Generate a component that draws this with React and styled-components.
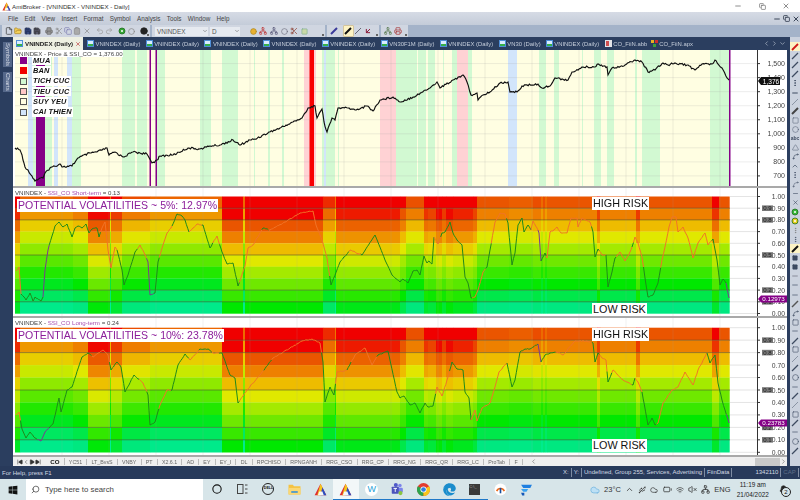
import React from "react";
import styled, { createGlobalStyle } from "styled-components";
import {
  ArrowDownLeft, ChevronDown, ChevronLeft, ChevronRight, ChevronUp, Circle, Clipboard, Cloud, Copy, File,
  FolderOpen, Minus, MoreVertical, Printer, Redo2, Save, Scissors, Search, Spline, Square, Triangle,
  Undo2, VolumeX, Wifi, X, Battery, Usb, Bell, Network, Play, SkipBack, SkipForward,
} from "lucide-react";
import { FaWindows, FaEdge } from "react-icons/fa";

const NAVY = "#2b3e5f";
const PURPLE = "#850087";

const GlobalStyle = createGlobalStyle`
  html, body { margin: 0; padding: 0; background: #fff; }
  body { width: 800px; height: 500px; overflow: hidden; font-family: "Liberation Sans", Arial, sans-serif; }
`;

const Frame = styled.div`
  width: 800px;
  height: 500px;
  display: flex;
  flex-direction: column;
  overflow: hidden;
  filter: blur(0.3px);
`;

const TitleBar = styled.div`
  height: 12px;
  background: #fff;
  display: flex;
  align-items: center;
  padding: 0 2px 0 2px;
  font-size: 6.2px;
  color: #333;
`;
const TitleText = styled.span`
  margin-left: 1px;
  flex: 1;
`;
const WinButton = styled.span`
  width: 24px;
  display: flex;
  justify-content: center;
  color: #555;
`;

const MenuBar = styled.div`
  height: 13px;
  background: linear-gradient(#d6dbe5, #c4ccd9);
  display: flex;
  align-items: center;
  padding-left: 8px;
  gap: 6.3px;
  font-size: 6.3px;
  color: #444;
`;
const MdiButtons = styled.div`
  margin-left: auto;
  display: flex;
  gap: 2px;
  color: #3b4658;
`;

const ToolRow = styled.div`
  height: 12px;
  background: #a4b3c9;
  display: flex;
  padding-left: 2px;
  gap: 2px;
`;
const ToolStrip = styled.div`
  width: ${(p) => p.$w}px;
  background: #d0d6e1;
  display: flex;
  align-items: center;
  padding-left: 3px;
  box-sizing: border-box;
  gap: ${(p) => p.$gap ?? 1}px;
  position: relative;
  &::after {
    content: "";
    position: absolute;
    right: 1px;
    bottom: 1px;
    width: 2px;
    height: 2px;
    background: #666;
  }
`;
const ToolIcon = styled.span`
  width: 8.3px;
  height: 10px;
  display: flex;
  align-items: center;
  justify-content: center;
  background: ${(p) => (p.$active ? "#fdf3c4" : "none")};
  box-shadow: ${(p) => (p.$active ? "0 0 0 0.5px #d8b45a" : "none")};
`;
const ToolGap = styled.span`
  width: ${(p) => p.$w}px;
`;
const Combo = styled.div`
  width: ${(p) => p.$w}px;
  height: 9px;
  background: #e6eaf0;
  font-size: 6.4px;
  color: #555;
  display: flex;
  align-items: center;
  padding-left: 2px;
  box-sizing: border-box;
  justify-content: space-between;
`;

const Workspace = styled.div`
  flex: 1;
  display: flex;
  min-height: 0;
`;
const LeftRail = styled.div`
  width: 13px;
  background: ${NAVY};
  padding-top: 5px;
  display: flex;
  flex-direction: column;
  align-items: flex-end;
  gap: 5px;
`;
const RailTab = styled.div`
  writing-mode: vertical-rl;
  width: 9px;
  height: ${(p) => p.$h}px;
  background: #55688a;
  color: #d5dbe6;
  font-size: 6px;
  line-height: 9px;
  text-align: center;
  margin-right: 1px;
`;
const Center = styled.div`
  width: 774px;
  display: flex;
  flex-direction: column;
`;
const TabStrip = styled.div`
  height: 13px;
  background: ${NAVY};
  display: flex;
  align-items: center;
  color: #c6cedb;
  font-size: 5.9px;
  white-space: nowrap;
`;
const ActiveTab = styled.div`
  width: 70px;
  height: 13px;
  margin-right: 3px;
  background: #eef0e2;
  color: #222;
  font-size: 6.2px;
  font-weight: bold;
  display: flex;
  align-items: center;
  gap: 2px;
  padding-left: 3px;
  box-sizing: border-box;
`;
const Tab = styled.div`
  width: ${(p) => p.$w}px;
  flex-shrink: 0;
  display: flex;
  align-items: center;
  gap: 1.5px;
`;
const TabTail = styled.div`
  margin-left: auto;
  display: flex;
  align-items: center;
  gap: 1px;
  padding-right: 1px;
`;
const ChartBody = styled.div`
  flex: 1;
  background: #fff;
  display: flex;
  flex-direction: column;
  min-height: 0;
`;
const Pane = styled.div`
  height: ${(p) => p.$h}px;
  position: relative;
  border-bottom: 2px solid #a9a9a9;
  flex-shrink: 0;
`;
const ChartSvg = styled.svg`
  display: block;
`;
const PaneTitle = styled.div`
  position: absolute;
  left: 2px;
  top: ${(p) => p.$top}px;
  font-size: 6.15px;
  line-height: 7px;
  color: #444;
  background: #fff;
  white-space: nowrap;
`;
const PaneTitleHi = styled.span`
  color: #a84fb0;
`;
const Legend = styled.div`
  position: absolute;
  left: 7px;
  top: 5.5px;
  display: flex;
  flex-direction: column;
  gap: 0.6px;
`;
const LegendRow = styled.div`
  display: flex;
  align-items: center;
  gap: 5px;
  height: 9.8px;
`;
const Swatch = styled.span`
  width: 5px;
  height: 5px;
  background: ${(p) => p.$color};
  border: 0.5px solid ${(p) => p.$edge};
`;
const LegendText = styled.span`
  background: #fff;
  font-size: 7.4px;
  line-height: 9.8px;
  font-weight: bold;
  font-style: italic;
  color: #111;
  padding: 0 1px;
  letter-spacing: 0.2px;
`;
const VolLabel = styled.div`
  position: absolute;
  left: 4px;
  top: ${(p) => p.$top}px;
  background: #fff;
  color: #8c1d9a;
  font-size: 10.55px;
  line-height: 13px;
  padding: 0 1px;
  white-space: nowrap;
`;
const RiskLabel = styled.div`
  position: absolute;
  left: 579px;
  top: ${(p) => p.$top}px;
  background: #fff;
  color: #111;
  font-size: 10.8px;
  line-height: 13px;
  padding: 0 1px;
  white-space: nowrap;
`;
const SheetRow = styled.div`
  height: 9px;
  background: #efefef;
  display: flex;
  align-items: center;
  font-size: 5.3px;
  color: #666;
  white-space: nowrap;
`;
const SheetNav = styled.div`
  display: flex;
  align-items: center;
  padding-left: 4px;
  width: 33px;
  color: #333;
  box-sizing: border-box;
`;
const Sheet = styled.span`
  padding: 0 4.2px;
  color: ${(p) => (p.$active ? "#111" : "#666")};
  font-size: ${(p) => (p.$active ? "6.2px" : "inherit")};
  font-weight: ${(p) => (p.$active ? "bold" : "normal")};
  border-right: 1px solid #bbb;
`;
const SheetTail = styled.div`
  margin-left: auto;
  width: 257px;
  display: flex;
  align-items: center;
  justify-content: space-between;
`;
const Thumb = styled.span`
  width: 25px;
  height: 8px;
  background: #c9c9c9;
  margin-left: auto;
`;
const RightBar = styled.div`
  width: 13px;
  box-sizing: border-box;
  border-left: 3px solid ${NAVY};
  background: #cbd2de;
  display: flex;
  flex-direction: column;
  padding-top: 5px;
  overflow: hidden;
`;
const RailButton = styled.div`
  height: 9.2px;
  flex-shrink: 0;
  display: flex;
  align-items: center;
  justify-content: center;
  color: #3d4a60;
  font-size: 5px;
  font-weight: bold;
  background: ${(p) => (p.$active ? "#fdf3c4" : "none")};
`;

const StatusBar = styled.div`
  height: 13px;
  background: #283a5b;
  color: #d3d9e4;
  font-size: 6px;
  display: flex;
  align-items: center;
  padding-left: 2px;
  white-space: nowrap;
`;
const StatusRight = styled.div`
  margin-left: auto;
  width: 239px;
  display: flex;
  align-items: center;
`;
const StatusCell = styled.span`
  border-right: 1px solid #7f8ca3;
  padding: 0 2px;
  height: 9px;
  line-height: 9px;
  color: ${(p) => p.$dim ?? "inherit"};
  margin-left: ${(p) => p.$ml ?? 0}px;
`;

const TaskBar = styled.div`
  height: 21px;
  background: #d7e5e9;
  display: flex;
  align-items: center;
`;
const StartSlot = styled.div`
  width: 26px;
  display: flex;
  justify-content: center;
  color: #111;
`;
const SearchBox = styled.div`
  width: 177px;
  height: 21px;
  background: #fff;
  display: flex;
  align-items: center;
  gap: 5px;
  padding-left: 5px;
  box-sizing: border-box;
  font-size: 7.8px;
  color: #444;
`;
const SearchGlyph = styled(Search)`
  transform: scaleX(-1);
`;
const TaskApps = styled.div`
  display: flex;
  align-items: center;
  height: 21px;
  margin-left: 1px;
`;
const TaskApp = styled.div`
  width: 25.8px;
  height: 21px;
  display: flex;
  align-items: center;
  justify-content: center;
  box-sizing: border-box;
  background: ${(p) => (p.$active ? "#f2f7f8" : "none")};
  border-bottom: 1px solid ${(p) => (p.$open ? "#1f78c8" : "transparent")};
  color: #111;
`;
const Tray = styled.div`
  margin-left: auto;
  display: flex;
  align-items: center;
  gap: 4.2px;
  padding-right: 9px;
  color: #333;
  font-size: 7.5px;
`;
const Clock = styled.div`
  display: flex;
  flex-direction: column;
  align-items: center;
  font-size: 6.4px;
  line-height: 10px;
  color: #222;
  width: 36px;
`;
const NotifyWrap = styled.div`
  position: relative;
  width: 16px;
  display: flex;
  justify-content: center;
`;
const NotifyBadge = styled.span`
  position: absolute;
  right: 0;
  bottom: -3px;
  width: 8px;
  height: 8px;
  border-radius: 50%;
  background: #d7e5e9;
  border: 0.5px solid #222;
  font-size: 6px;
  line-height: 8px;
  text-align: center;
  color: #111;
`;
const DellMark = styled.span`
  width: 12px;
  height: 12px;
  border-radius: 50%;
  border: 1.2px solid #222;
  box-sizing: border-box;
  font-size: 3.6px;
  font-weight: bold;
  line-height: 9.5px;
  text-align: center;
`;
const WApp = styled.span`
  width: 13px;
  height: 13px;
  border-radius: 50%;
  background: #fff;
  color: #1f9fd8;
  font-size: 9px;
  line-height: 13px;
  text-align: center;
`;
const TermApp = styled.span`
  width: 11px;
  height: 11px;
  background: #3a3a3a;
  color: #aaa;
  font-size: 4px;
  line-height: 5px;
`;
const TabGlyph = styled.svg`
  flex-shrink: 0;
`;

// chart data, all in screen coordinates
const PRICE_BANDS = [
  [28, 33, "b"], [33, 36, "g"], [45, 52, "g"], [54, 58, "b"], [67, 72, "b"], [72, 81, "g"], [122, 135, "g"],
  [137, 147, "g"], [157, 165, "g"], [200, 211, "g"], [222, 238, "g"], [254, 255, "g"], [268, 270, "g"],
  [282, 284, "g"], [304, 310, "p"], [314, 316, "p"], [322, 324, "g"], [324, 326, "b"], [326, 335, "g"],
  [338, 339, "g"], [380, 396, "p"], [396, 417, "g"], [418, 426, "g"], [428, 435, "g"], [443, 444, "g"],
  [452, 457, "g"], [457, 468, "p"], [468, 472, "g"], [508, 517, "b"], [539, 546, "g"], [554, 559, "g"],
  [582, 583, "g"], [594, 601, "g"], [607, 614, "g"], [635, 637, "g"], [642, 660, "g"], [710, 729, "g"],
];
const BAND_COLOR = { g: "#d2f9d2", b: "#d2e5fb", p: "#ffd2d4" };
const PRICE_BARS = [[36, 45, PURPLE], [149.5, 151, PURPLE], [155.5, 157, PURPLE], [309.5, 314, "#f80000"], [729, 730.5, PURPLE]];

const PRICE = [
  [15, 148], [20, 150], [22, 155], [23, 160], [25, 167], [28, 170], [32, 176], [35, 181], [40, 178], [43, 178], [45, 173], [50, 168],
  [60, 164], [63, 167], [72, 166], [78, 158], [90, 153], [97, 152], [107, 148], [109, 155], [115, 152], [123, 157], [133, 152], [147, 154],
  [152, 163], [157, 160], [160, 156], [173, 155], [188, 148], [200, 149], [210, 146], [220, 145], [233, 140], [240, 145], [250, 140], [255, 139],
  [270, 132], [280, 128], [293, 122], [302, 118], [308, 108], [315, 106], [317, 118], [322, 109], [324, 122], [327, 132], [332, 118], [335, 120],
  [338, 108], [348, 108], [355, 110], [367, 106], [373, 111], [380, 100], [393, 97], [400, 102], [413, 97], [430, 88], [437, 82], [440, 88],
  [453, 80], [463, 75], [467, 82], [471, 95], [477, 93], [478, 100], [483, 95], [490, 92], [500, 83], [508, 82], [510, 92], [517, 92], [522, 86],
  [538, 84], [542, 88], [550, 86], [555, 78], [568, 80], [572, 72], [583, 67], [595, 67], [598, 64], [607, 67], [608, 75], [612, 68], [625, 65],
  [635, 60], [642, 62], [648, 72], [655, 70], [663, 63], [668, 65], [675, 63], [687, 65], [695, 70], [702, 64], [712, 64], [715, 60], [722, 68],
  [727, 78], [729, 80],
];
const SHORT = [
  [16, 271], [19, 267], [21, 294], [24, 297], [26, 300], [30, 293], [33, 301], [35, 297], [41, 301], [43, 297], [45, 270], [48, 250], [52, 236],
  [55, 226], [59, 222], [63, 227], [67, 224], [72, 237], [75, 228], [78, 226], [82, 228], [86, 224], [89, 233], [92, 229], [97, 228], [99, 237],
  [102, 228], [105, 222], [108, 250], [111, 268], [115, 247], [117, 250], [122, 270], [124, 285], [128, 275], [135, 252], [140, 245], [145, 255],
  [148, 262], [150, 295], [155, 293], [158, 262], [163, 245], [167, 233], [172, 226], [177, 214], [182, 216], [185, 220], [189, 232], [193, 228],
  [197, 224], [203, 225], [210, 248], [217, 236], [222, 252], [227, 264], [233, 263], [238, 286], [245, 266], [248, 248], [253, 245], [263, 228],
  [270, 230], [285, 222], [300, 213], [313, 211], [316, 225], [322, 240], [327, 258], [331, 285], [340, 262], [350, 250], [362, 255], [375, 235],
  [385, 260], [392, 275], [400, 282], [403, 279], [408, 283], [413, 271], [417, 270], [420, 275], [424, 256], [427, 263], [429, 261], [432, 264],
  [434, 237], [438, 244], [442, 233], [445, 232], [450, 222], [453, 233], [457, 240], [462, 245], [465, 277], [468, 283], [471, 298], [475, 297],
  [478, 290], [483, 272], [487, 267], [490, 250], [495, 222], [500, 213], [505, 214], [508, 223], [512, 265], [515, 253], [518, 225], [522, 218],
  [524, 232], [528, 225], [531, 230], [533, 221], [537, 228], [539, 233], [541, 261], [545, 253], [547, 258], [550, 232], [554, 230], [557, 227],
  [561, 233], [567, 233], [571, 218], [577, 218], [578, 227], [582, 218], [590, 222], [593, 232], [595, 257], [598, 249], [602, 255], [606, 255],
  [608, 287], [612, 272], [615, 258], [620, 252], [625, 261], [630, 252], [632, 247], [635, 237], [638, 243], [642, 257], [645, 278], [648, 297],
  [653, 295], [658, 283], [662, 260], [665, 247], [669, 227], [672, 217], [676, 217], [678, 232], [683, 227], [688, 238], [693, 258], [698, 243],
  [705, 233], [708, 245], [713, 239], [717, 260], [720, 285], [723, 279], [726, 283], [729, 298],
];
const LONG = [
  [16, 415], [19, 412], [22, 429], [26, 438], [30, 432], [35, 438], [41, 441], [45, 432], [53, 424], [59, 398], [61, 412], [67, 390], [72, 387],
  [82, 357], [88, 353], [93, 357], [103, 350], [108, 355], [111, 370], [117, 362], [121, 367], [125, 392], [134, 375], [143, 383], [148, 395],
  [150, 425], [155, 422], [160, 405], [167, 390], [172, 390], [178, 365], [185, 354], [190, 360], [200, 349], [208, 349], [213, 353], [222, 353],
  [230, 375], [235, 378], [238, 403], [247, 390], [260, 375], [273, 358], [290, 348], [302, 341], [312, 339], [320, 343], [323, 362], [325, 402],
  [330, 387], [334, 395], [337, 372], [347, 370], [355, 355], [365, 348], [372, 365], [378, 355], [388, 351], [397, 392], [400, 398], [404, 396],
  [410, 405], [415, 403], [420, 413], [425, 403], [428, 407], [433, 406], [437, 387], [442, 396], [447, 380], [452, 362], [457, 369], [463, 370],
  [465, 392], [469, 398], [471, 420], [475, 410], [477, 421], [482, 408], [490, 403], [495, 387], [499, 372], [507, 363], [512, 387], [515, 380],
  [520, 352], [525, 349], [530, 349], [538, 344], [541, 362], [545, 355], [550, 353], [557, 352], [563, 355], [575, 341], [587, 341], [593, 343],
  [595, 362], [598, 353], [602, 358], [606, 360], [608, 382], [613, 370], [623, 380], [633, 385], [635, 378], [638, 382], [642, 392], [648, 425],
  [652, 418], [655, 425], [658, 423], [663, 403], [672, 390], [678, 387], [685, 372], [693, 385], [698, 370], [707, 353], [710, 363], [715, 355],
  [718, 383], [722, 400], [725, 410], [729, 423],
];
const ORANGE = "#f07428";
const GREEN = "#1f8a1a";
const VIOLET = "#7a3a90";
const SHORT_RANGES = [
  [16, 22, ORANGE], [44, 50, VIOLET], [102, 118, ORANGE], [138, 148, ORANGE], [148, 155, VIOLET], [160, 173, ORANGE], [190, 203, ORANGE],
  [213, 220, ORANGE], [240, 263, ORANGE], [270, 330, ORANGE], [350, 362, ORANGE], [435, 442, ORANGE], [473, 487, ORANGE], [492, 508, ORANGE],
  [532, 539, ORANGE], [539, 542, VIOLET], [547, 593, ORANGE], [600, 607, ORANGE], [617, 633, ORANGE], [635, 645, ORANGE], [662, 712, ORANGE],
  [727, 730, VIOLET],
];
const LONG_RANGES = [
  [16, 22, ORANGE], [38, 50, VIOLET], [92, 110, ORANGE], [140, 148, ORANGE], [160, 172, ORANGE], [190, 200, ORANGE], [213, 220, ORANGE],
  [240, 265, ORANGE], [272, 322, ORANGE], [336, 348, ORANGE], [352, 378, ORANGE], [437, 450, ORANGE], [472, 508, ORANGE], [539, 542, VIOLET],
  [557, 593, ORANGE], [600, 608, ORANGE], [613, 633, ORANGE], [636, 643, ORANGE], [658, 708, ORANGE], [727, 730, VIOLET],
];
// end x and colour shift of each heat column; both oscillator panes share them
const HEAT_COLS = [
  [20, -0.5], [73, 1.4], [88, 1], [110, -0.9], [111, 1.9], [122, -0.3], [150, 0.9], [222, 1.4], [243, -1], [245, 1.5], [323, -1], [335, 0.5],
  [336, 1.8], [400, -0.7], [406, 0], [424, 0.95], [428, -0.4], [436, -0.2], [442, -0.9], [446, -0.3], [453, -0.9], [473, -0.6], [477, -0.2],
  [509, 1], [533, 1.2], [541, 0.9], [543, 1.5], [545, 0.9], [547, 1.5], [597, 1], [600, -0.2], [636, 1], [640, -0.3], [712, 1], [719, -0.4], [729.5, 1],
];
const PALETTE = ["#f00000", "#ea5500", "#ee8000", "#eebc00", "#e0e800", "#a4ea00", "#6fe800", "#38e800", "#00e800", "#00e84a", "#00e880", "#00ee99"];

const hexToRgb = (h) => [1, 3, 5].map((i) => parseInt(h.slice(i, i + 2), 16));
const paletteAt = (v) => {
  const t = Math.max(0, Math.min(v, PALETTE.length - 1));
  const lo = Math.floor(t);
  const hi = Math.min(lo + 1, PALETTE.length - 1);
  const a = hexToRgb(PALETTE[lo]);
  const b = hexToRgb(PALETTE[hi]);
  const c = a.map((n, i) => Math.round(n + (b[i] - n) * (t - lo)));
  return `rgb(${c.join(",")})`;
};
const noise = (i) => {
  const s = Math.sin(i * 12.9898) * 43758.5453;
  return s - Math.floor(s) - 0.5;
};
// break the hand-read outline into small jittered steps so it looks like daily data
const roughen = (pts, amp, step) => {
  const out = [];
  let k = 0;
  pts.forEach(([x, y], i) => {
    if (i === 0) {
      out.push([x, y]);
      return;
    }
    const [px, py] = pts[i - 1];
    const n = Math.max(1, Math.round((x - px) / step));
    for (let j = 1; j <= n; j++) {
      k += 1;
      const t = j / n;
      out.push([px + (x - px) * t, py + (y - py) * t + (j === n ? 0 : noise(k) * amp)]);
    }
  });
  return out;
};
const toPath = (pts) => pts.map(([x, y], i) => `${i ? "L" : "M"}${x.toFixed(1)} ${y.toFixed(1)}`).join("");
const colorFor = (x, ranges) => {
  const hit = ranges.find(([a, b]) => x >= a && x < b);
  return hit ? hit[2] : GREEN;
};
const splitByColor = (pts, ranges) => {
  const runs = [];
  pts.forEach((p, i) => {
    const c = colorFor(p[0], ranges);
    const last = runs[runs.length - 1];
    if (last && last.color === c) last.pts.push(p);
    else runs.push({ color: c, pts: i ? [pts[i - 1], p] : [p] });
  });
  return runs;
};

const GRID_X = [62, 109, 156, 203, 250, 297, 344, 391, 438, 485, 532, 579, 626, 673, 720];
const LEFT = 13;

const PriceChart = ({ h }) => {
  const ticks = [1500, 1400, 1300, 1200, 1100, 1000, 900, 800, 700];
  const y = (p) => 63.6 + (1500 - p) * 0.1404;
  const pts = roughen(PRICE, 2, 1.2);
  return (
    <ChartSvg width="774" height={h} viewBox={`${LEFT} 50 774 ${h}`}>
      <rect x="15" y="50" width="714" height={h} fill="#fffee2" />
      {PRICE_BANDS.map(([a, b, c]) => (
        <rect key={a} x={a} y="50" width={b - a} height={h} fill={BAND_COLOR[c]} />
      ))}
      {GRID_X.map((x) => (
        <line key={x} x1={x} x2={x} y1="50" y2={50 + h} stroke="#a0a0a0" strokeOpacity=".18" />
      ))}
      {ticks.map((t) => (
        <line key={t} x1="15" x2="757" y1={y(t)} y2={y(t)} stroke="#a0a0a0" strokeOpacity=".2" />
      ))}
      {PRICE_BARS.map(([a, b, c]) => (
        <rect key={a} x={a} y="50" width={b - a} height={h} fill={c} />
      ))}
      <path d={toPath(pts)} fill="none" stroke="#111" strokeWidth="1.15" />
      <line x1="757.5" x2="757.5" y1="50" y2={50 + h} stroke="#333" />
      {ticks.map((t) => (
        <g key={t}>
          <line x1="757" x2="760" y1={y(t)} y2={y(t)} stroke="#333" />
          <text x="785" y={y(t) + 2.5} textAnchor="end" fontSize="7" fill="#444">
            {t.toLocaleString("en-US")}
          </text>
        </g>
      ))}
      <path d="M758 81 l3 -4 h19 v8 h-19 z" fill="#111" />
      <text x="771" y="83.5" textAnchor="middle" fontSize="6.6" fill="#fff">
        1,376
      </text>
    </ChartSvg>
  );
};

const MARKS = [0.9, 0.8, 0.5, 0.2, 0.1];
const OscChart = ({ top, h, y1, y0, series, ranges, tag, tagY }) => {
  const row = (y0 - y1) / 10;
  const pts = roughen(series, 1, 1.3);
  const runs = splitByColor(pts, ranges);
  const vals = [10, 9, 8, 7, 6, 5, 4, 3, 2, 1, 0];
  return (
    <ChartSvg width="774" height={h} viewBox={`${LEFT} ${top} 774 ${h}`}>
      {HEAT_COLS.map(([end, shift], c) => {
        const start = c ? HEAT_COLS[c - 1][0] : 15;
        return Array.from({ length: 10 }, (_, r) => (
          <rect key={`${c}-${r}`} x={start} y={y1 + r * row} width={end - start + 0.2} height={row + 0.2} fill={paletteAt(r + shift)} />
        ));
      })}
      {GRID_X.map((x) => (
        <line key={x} x1={x} x2={x} y1={top} y2={top + h} stroke="#a0a0a0" strokeOpacity=".15" />
      ))}
      {vals.map((v) => (
        <line key={v} x1="730" x2="757" y1={y0 - v * row} y2={y0 - v * row} stroke="#bbb" strokeOpacity=".4" />
      ))}
      {MARKS.map((m) => (
        <line key={m} x1="15" x2="730" y1={y0 - m * 10 * row} y2={y0 - m * 10 * row} stroke="#4a4a30" strokeOpacity=".55" />
      ))}
      {runs.map((run, i) => (
        <path key={i} d={toPath(run.pts)} fill="none" stroke={run.color} strokeWidth="1" />
      ))}
      <line x1="757.5" x2="757.5" y1={top} y2={top + h} stroke="#333" />
      {vals.map((v) => (
        <g key={v}>
          <line x1="757" x2="760" y1={y0 - v * row} y2={y0 - v * row} stroke="#333" />
          <text x="785" y={y0 - v * row + 2.5} textAnchor="end" fontSize="6.8" fill="#444">
            {(v / 10).toFixed(2)}
          </text>
        </g>
      ))}
      {MARKS.map((m) => (
        <g key={m}>
          <rect x="762" y={y0 - m * 10 * row - 2.8} width="11" height="5.6" fill="#777" />
          <text x="767.5" y={y0 - m * 10 * row + 2.2} textAnchor="middle" fontSize="6" fill="#222">
            {m.toFixed(1)}
          </text>
        </g>
      ))}
      <path d={`M758 ${tagY} l3 -3.5 h26 v7 h-26 z`} fill={PURPLE} />
      <text x="773.5" y={tagY + 2.3} textAnchor="middle" fontSize="6.2" fill="#fff">
        {tag}
      </text>
    </ChartSvg>
  );
};

const AmiLogo = ({ size = 10 }) => (
  <svg width={size} height={size} viewBox="0 0 20 20">
    <polygon points="10,1 1,19 19,19" fill="#e03030" />
    <polygon points="10,1 5,19 10,19 13,7" fill="#f3c61e" />
    <polygon points="13,7 10,19 19,19" fill="#2b4fc0" />
    <polygon points="8,13 13,13 15,19 6,19" fill="#f7f7f7" />
  </svg>
);
const ChartTabIcon = () => (
  <TabGlyph width="7" height="7" viewBox="0 0 7 7">
    <rect width="7" height="7" fill="#4d8ed8" />
    <rect x="1" y="1" width="5" height="3" fill="#d8ecff" />
    <rect x="1" y="4" width="5" height="2" fill="#35b04a" />
  </TabGlyph>
);
const AbbIcon = () => (
  <TabGlyph width="7" height="7" viewBox="0 0 7 7">
    <rect width="7" height="7" fill="#e4e4e8" />
    <rect x="1" y="1" width="3" height="5" fill="#d05050" />
  </TabGlyph>
);
const ApxIcon = () => (
  <TabGlyph width="7" height="7" viewBox="0 0 7 7">
    <rect x="0" y="0" width="3" height="3" fill="#e8b020" />
    <rect x="4" y="0" width="3" height="3" fill="#d02c2c" />
    <rect x="2" y="4" width="3" height="3" fill="#3aa03a" />
  </TabGlyph>
);
const ChromeIcon = () => (
  <svg width="13" height="13" viewBox="0 0 24 24">
    <circle cx="12" cy="12" r="12" fill="#e33b2e" />
    <path d="M12 12 L1.6 6 A12 12 0 0 0 12 24 Z" fill="#2da44e" />
    <path d="M12 12 L12 24 A12 12 0 0 0 22.4 6 Z" fill="#f7c51c" />
    <circle cx="12" cy="12" r="5.6" fill="#fff" />
    <circle cx="12" cy="12" r="4.3" fill="#2f7de1" />
  </svg>
);
const TeamsIcon = () => (
  <svg width="14" height="14" viewBox="0 0 24 24">
    <circle cx="17" cy="6" r="3" fill="#7b83eb" />
    <rect x="12" y="10" width="10" height="8" rx="2" fill="#7b83eb" />
    <circle cx="10" cy="5" r="3.5" fill="#5059c9" />
    <rect x="3" y="8" width="12" height="12" rx="1" fill="#4b53bc" />
    <path d="M6 11h6M9 11v6" stroke="#fff" strokeWidth="1.6" />
    <circle cx="18" cy="19" r="3.5" fill="#8ac43f" />
  </svg>
);
const FolderIcon = () => (
  <svg width="13" height="12" viewBox="0 0 24 22">
    <path d="M1 3h8l2 3h12v15H1z" fill="#f5c242" />
    <rect x="1" y="9" width="22" height="12" fill="#fbd774" />
    <rect x="6" y="15" width="12" height="3" fill="#3a93d8" />
  </svg>
);
const FLogo = () => (
  <svg width="13" height="13" viewBox="0 0 24 24">
    <path d="M2 3h20l-3 6H6z" fill="#1f7fe0" />
    <path d="M2 11h13l-3 5H6z" fill="#3aa2f0" />
    <path d="M2 18h6v5H4z" fill="#1558b8" />
  </svg>
);
const FinIcon = () => (
  <svg width="13" height="13" viewBox="0 0 24 24">
    <circle cx="12" cy="12" r="11" fill="#fff" />
    <path d="M5 15a7.5 7.5 0 0 1 14 0" fill="none" stroke="#ee6a1c" strokeWidth="3" />
    <rect x="10.5" y="9" width="3" height="10" fill="#1b4e9a" />
  </svg>
);
const TaskViewIcon = () => (
  <svg width="11" height="10" viewBox="0 0 11 10">
    <rect x="0.5" y="0.5" width="5.5" height="9" fill="none" stroke="#444" />
    <path d="M8 1h2.5M8 5h2.5M8 9h2.5" stroke="#444" />
  </svg>
);
const DiagIcon = ({ color, width = 1.4 }) => (
  <svg width="8" height="8" viewBox="0 0 8 8">
    <path d="M1 7 L7 1" stroke={color} strokeWidth={width} fill="none" />
  </svg>
);
const DotIcon = ({ color }) => (
  <svg width="8" height="8" viewBox="0 0 8 8">
    <circle cx="4" cy="4" r="3" fill={color} stroke="#1e6e1e" strokeWidth=".8" />
    <circle cx="4" cy="4" r="1" fill="#fff" />
  </svg>
);

const WINDOW_TABS = [
  ["VNINDEX (Daily)", 58.7], ["VNINDEX (Daily)", 58.7], ["VNINDEX (Daily)", 58.7], ["VNINDEX (Daily)", 58.7], ["VNINDEX (Daily)", 59],
  ["VN30F1M (Daily)", 59], ["VNINDEX (Daily)", 59], ["VN30 (Daily)", 47], ["VNINDEX (Daily)", 59],
];
const SHEETS = ["YC51", "LT_BvsS", "VNBY", "PT", "X2.6.1", "AD", "EY", "EY_I", "DL", "RPCHISO", "RPNGANH", "RRG_CSO", "RRG_CP", "RRG_NG", "RRG_QR", "RRG_LC", "ProTab", "F"];
const MENUS = ["File", "Edit", "View", "Insert", "Format", "Symbol", "Analysis", "Tools", "Window", "Help"];
const LEGEND = [
  ["MUA", PURPLE, PURPLE], ["BAN", "#f00000", "#f00000"], ["TICH CUC", "#d2f9d2", "#555"], ["TIEU CUC", "#ffc8c8", "#555"],
  ["SUY YEU", "#fffee2", "#555"], ["CAI THIEN", "#d2e5fb", "#555"],
];

const railIcons = () => {
  const slash = <DiagIcon color="#3d4a60" width={1.2} />;
  const faint = <DiagIcon color="#8a94a4" width={1} />;
  return [
    { icon: <DiagIcon color="#d01818" width={1.8} />, active: true },
    { icon: slash }, { icon: slash }, { icon: slash },
    { icon: <MoreVertical size={8} strokeWidth={2.5} /> },
    { icon: <Minus size={8} strokeWidth={3} /> },
    { icon: faint }, { icon: <DiagIcon color="#444" width={2} /> },
    { icon: <Square size={7} strokeWidth={1.5} /> },
    { icon: <Circle size={7} strokeWidth={1.5} /> },
    { icon: "abc" },
    { icon: <Triangle size={7} strokeWidth={1.5} /> },
    { icon: <Spline size={7} /> },
    { icon: <ChevronUp size={8} /> },
    { icon: <MoreVertical size={8} /> },
    { icon: <Spline size={7} strokeWidth={1.5} /> },
    { icon: <Minus size={7} /> },
    { icon: <X size={7} /> },
    { icon: <DotIcon color="#38b838" /> },
    { icon: <DotIcon color="#e8d020" /> },
    { icon: <MoreVertical size={7} color="#777" /> },
    { icon: <MoreVertical size={7} /> },
    { icon: <DiagIcon color="#111" width={2} />, active: true },
    { icon: <Square size={6} fill="#3d4a60" /> },
    { icon: <Square size={6} fill="#3d4a60" /> },
    { icon: <Minus size={8} color="#667" /> },
    { icon: <Minus size={8} /> }, { icon: <Minus size={8} /> },
    { icon: <DiagIcon color="#555" /> }, { icon: <Spline size={7} /> }, { icon: <Square size={7} /> },
    { icon: <Minus size={8} /> }, { icon: slash }, { icon: <Square size={7} /> }, { icon: faint }, { icon: slash },
    { icon: <Circle size={7} /> }, { icon: <Minus size={8} /> }, { icon: slash }, { icon: faint }, { icon: <Square size={7} /> },
    { icon: slash }, { icon: <Minus size={8} /> }, { icon: <Circle size={7} /> }, { icon: slash },
  ];
};

const App = () => (
  <Frame>
    <GlobalStyle />
    <TitleBar>
      <AmiLogo size={9} />
      <TitleText>AmiBroker - [VNINDEX - VNINDEX - Daily]</TitleText>
      <WinButton><Minus size={8} /></WinButton>
      <WinButton><Copy size={7} /></WinButton>
      <WinButton><X size={8} /></WinButton>
    </TitleBar>
    <MenuBar>
      {MENUS.map((m) => (
        <span key={m}>{m}</span>
      ))}
      <MdiButtons>
        <Minus size={8} strokeWidth={3} />
        <Copy size={7} strokeWidth={3} />
        <X size={8} strokeWidth={3} />
      </MdiButtons>
    </MenuBar>
    <ToolRow>
      <ToolStrip $w={148}>
        <ToolIcon><File size={8} color="#333" /></ToolIcon>
        <ToolIcon><FolderOpen size={8} color="#a8801c" fill="#f2cf59" /></ToolIcon>
        <ToolIcon><Save size={8} color="#1f2c50" fill="#34467a" /></ToolIcon>
        <ToolIcon><Save size={8} color="#333" fill="#556" /></ToolIcon>
        <ToolGap $w={2} />
        <ToolIcon><Printer size={8} color="#666" fill="#999" /></ToolIcon>
        <ToolIcon><Scissors size={8} color="#888" /></ToolIcon>
        <ToolIcon><Copy size={8} color="#7a7ab0" /></ToolIcon>
        <ToolIcon><Clipboard size={8} color="#888" fill="#aaa" /></ToolIcon>
        <ToolIcon><X size={8} color="#888" /></ToolIcon>
        <ToolGap $w={3} />
        <ToolIcon><Undo2 size={8} color="#999" /></ToolIcon>
        <ToolIcon><Redo2 size={8} color="#999" /></ToolIcon>
        <ToolGap $w={3} />
        <ToolIcon><DotIcon color="#35a535" /></ToolIcon>
        <ToolIcon><Circle size={7} color="#888" strokeWidth={2.5} /></ToolIcon>
        <ToolGap $w={2} />
        <ToolIcon><Circle size={8} color="#222" fill="#222" /></ToolIcon>
      </ToolStrip>
      <ToolStrip $w={173} $gap={2}>
        <Combo $w={53}>VNINDEX<ChevronDown size={6} /></Combo>
        <Combo $w={30}>D<ChevronDown size={6} /></Combo>
        <ToolGap $w={5} />
        <ToolIcon><Circle size={7} color="#a08020" fill="#e8b030" /></ToolIcon>
        <ToolIcon><Network size={8} color="#c03030" /></ToolIcon>
        <ToolIcon><Network size={8} color="#557" /></ToolIcon>
        <ToolIcon><Circle size={7} color="#667" /></ToolIcon>
        <ToolIcon><Scissors size={8} color="#8a3a2a" /></ToolIcon>
        <ToolIcon><Square size={7} color="#7a8" fill="#c8d8a8" /></ToolIcon>
      </ToolStrip>
      <ToolStrip $w={52} $gap={1.5}>
        <ToolIcon><DiagIcon color="#3a3a9a" width={2} /></ToolIcon>
        <ToolGap $w={3} />
        <ToolIcon $active><DiagIcon color="#111" width={2} /></ToolIcon>
        <ToolIcon><DiagIcon color="#667" width={1} /></ToolIcon>
        <ToolIcon><ArrowDownLeft size={8} color="#8a1c3c" strokeWidth={3} /></ToolIcon>
      </ToolStrip>
      <ToolStrip $w={27} $gap={2}>
        <ToolIcon><Network size={8} color="#55774a" /></ToolIcon>
        <ToolIcon><Printer size={8} color="#a83030" /></ToolIcon>
      </ToolStrip>
    </ToolRow>
    <Workspace>
      <LeftRail>
        <RailTab $h={25}>Symbols</RailTab>
        <RailTab $h={20}>Charts</RailTab>
      </LeftRail>
      <Center>
        <TabStrip>
          <ActiveTab>
            <ChartTabIcon />
            VNINDEX (Daily)
            <X size={6} color="#c05050" strokeWidth={3} />
          </ActiveTab>
          <ToolGap $w={1} />
          {WINDOW_TABS.map(([name, w], i) => (
            <Tab key={i} $w={w}>
              <ChartTabIcon />
              {name}
            </Tab>
          ))}
          <Tab $w={46}><AbbIcon />CO_FiiN.abb</Tab>
          <Tab $w={49}><ApxIcon />CO_FiiN.apx</Tab>
          <TabTail>
            <ChevronLeft size={7} />
            <ChevronRight size={7} />
            <ChevronDown size={7} />
          </TabTail>
        </TabStrip>
        <ChartBody>
          <Pane $h={136}>
            <PriceChart h={136} />
            <Legend>
              {LEGEND.map(([name, color, edge]) => (
                <LegendRow key={name}>
                  <Swatch $color={color} $edge={edge} />
                  <LegendText>{name}</LegendText>
                </LegendRow>
              ))}
            </Legend>
            <PaneTitle $top={0}>VNINDEX - Price &amp; SSI_CO = 1,376.00</PaneTitle>
          </Pane>
          <Pane $h={128}>
            <OscChart top={188} h={128} y1={196.5} y0={313.5} series={SHORT} ranges={SHORT_RANGES} tag="0.12973" tagY={299} />
            <PaneTitle $top={1}>
              VNINDEX - <PaneTitleHi>SSI_CO Short-term</PaneTitleHi> = 0.13
            </PaneTitle>
            <VolLabel $top={11}>POTENTIAL VOLATILITIES ~ 5%: 12.97%</VolLabel>
            <RiskLabel $top={9}>HIGH RISK</RiskLabel>
            <RiskLabel $top={115}>LOW RISK</RiskLabel>
          </Pane>
          <Pane $h={137}>
            <OscChart top={318} h={137} y1={327.7} y0={452.3} series={LONG} ranges={LONG_RANGES} tag="0.23783" tagY={423} />
            <PaneTitle $top={1}>
              VNINDEX - <PaneTitleHi>SSI_CO Long-term</PaneTitleHi> = 0.24
            </PaneTitle>
            <VolLabel $top={11}>POTENTIAL VOLATILITIES ~ 10%: 23.78%</VolLabel>
            <RiskLabel $top={10}>HIGH RISK</RiskLabel>
            <RiskLabel $top={121}>LOW RISK</RiskLabel>
          </Pane>
        </ChartBody>
        <SheetRow>
          <SheetNav>
            <SkipBack size={6} fill="#333" />
            <ChevronLeft size={6} />
            <Play size={6} fill="#333" />
            <SkipForward size={6} fill="#333" />
          </SheetNav>
          <Sheet $active>CO</Sheet>
          {SHEETS.map((s) => (
            <Sheet key={s}>{s}</Sheet>
          ))}
          <SheetTail>
            <ChevronLeft size={7} />
            <Thumb />
            <ChevronRight size={7} />
          </SheetTail>
        </SheetRow>
      </Center>
      <RightBar>
        {railIcons().map((b, i) => (
          <RailButton key={i} $active={b.active}>{b.icon}</RailButton>
        ))}
      </RightBar>
    </Workspace>
    <StatusBar>
      <span>For Help, press F1</span>
      <StatusRight>
        <StatusCell>X:</StatusCell>
        <StatusCell>Y:</StatusCell>
        <StatusCell>Undefined, Group 255, Services, Advertising</StatusCell>
        <StatusCell>FiinData</StatusCell>
        <StatusCell $ml={21}>1342110</StatusCell>
        <StatusCell $dim="#5f6f8a">CAP</StatusCell>
      </StatusRight>
    </StatusBar>
    <TaskBar>
      <StartSlot><FaWindows size={10} /></StartSlot>
      <SearchBox>
        <SearchGlyph size={9} />
        Type here to search
      </SearchBox>
      <TaskApps>
        <TaskApp><Circle size={10} strokeWidth={2.6} /></TaskApp>
        <TaskApp><TaskViewIcon /></TaskApp>
        <TaskApp><DellMark>DELL</DellMark></TaskApp>
        <TaskApp><FolderIcon /></TaskApp>
        <TaskApp><AmiLogo size={13} /></TaskApp>
        <TaskApp $active $open><AmiLogo size={13} /></TaskApp>
        <TaskApp $open><WApp>W</WApp></TaskApp>
        <TaskApp $open><TeamsIcon /></TaskApp>
        <TaskApp $open><ChromeIcon /></TaskApp>
        <TaskApp $open><FaEdge size={13} color="#1a8ccc" /></TaskApp>
        <TaskApp $open><TermApp>C:\_</TermApp></TaskApp>
        <TaskApp><FinIcon /></TaskApp>
        <TaskApp><FLogo /></TaskApp>
      </TaskApps>
      <Tray>
        <Cloud size={10} color="#7ab8e0" fill="#bde0f5" />
        <span>23°C</span>
        <ChevronUp size={9} />
        <Usb size={8} />
        <Cloud size={8} />
        <Battery size={9} />
        <Wifi size={8} />
        <VolumeX size={9} />
        <Network size={9} />
        <span>ENG</span>
        <Clock>
          <span>11:19 am</span>
          <span>21/04/2022</span>
        </Clock>
        <NotifyWrap>
          <Bell size={9} fill="#222" />
          <NotifyBadge>2</NotifyBadge>
        </NotifyWrap>
      </Tray>
    </TaskBar>
  </Frame>
);

export default App;
